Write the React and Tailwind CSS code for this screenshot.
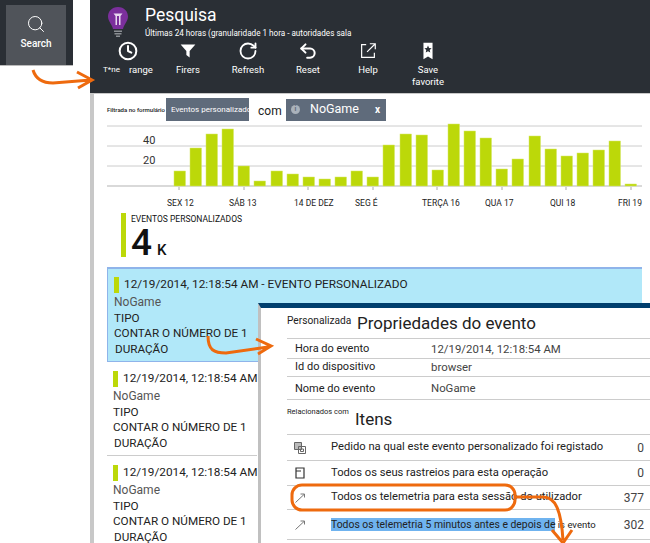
import { Clock, RotateCw, Search, Undo2 } from 'lucide-react';

const FONT = { fontFamily: 'Roboto, "Open Sans", sans-serif' };

const barData = [
  [174, 171], [190, 148], [206, 134], [222, 129], [238, 166], [254, 181], [271, 171], [287, 174],
  [303, 177], [319, 179], [335, 177], [351, 171], [367, 177], [383, 145], [400, 134], [416, 135],
  [432, 170], [448, 124], [464, 131], [480, 138], [496, 169], [512, 159], [529, 136], [545, 149],
  [561, 156], [577, 153], [593, 150], [609, 141], [625, 184],
];

const axisLabels = [
  ['SEX 12', 167, 179],
  ['SÁB 13', 229, 244],
  ['14 DE DEZ', 294, 308],
  ['SEG É', 355, 373],
  ['TERÇA 16', 422, 437],
  ['QUA 17', 485, 502],
  ['QUI 18', 550, 566],
  ['FRI 19', 618, 631],
];

const tools = [
  { label: 'range', icon: <Clock size={20} strokeWidth={2.4} /> },
  { label: 'Firers', icon: <FunnelIcon /> },
  { label: 'Refresh', icon: <RotateCw size={20} strokeWidth={2.2} /> },
  { label: 'Reset', icon: <Undo2 size={20} strokeWidth={2.4} /> },
  { label: 'Help', icon: <OpenIcon /> },
  { label: 'Save favorite', icon: <SaveIcon /> },
];

const props = [
  ['Hora do evento', '12/19/2014, 12:18:54 AM', 'h-[20px] pt-[2px]'],
  ['Id do dispositivo', 'browser', 'h-[18px]'],
  ['Nome do evento', 'NoGame', 'h-[23px] pt-[2px]'],
];

function FunnelIcon() {
  return (
    <svg width="18" height="18" viewBox="0 0 22 22">
      <path d="M2 3h18l-7 8v8l-4-3v-5z" fill="#fff" />
    </svg>
  );
}

function OpenIcon() {
  return (
    <svg width="20" height="20" viewBox="0 0 22 22" fill="none" stroke="#fff" strokeWidth="1.3">
      <path d="M9 4H4v14h14v-5M10 12l9-9M13 3h6v6" />
    </svg>
  );
}

function SaveIcon() {
  return (
    <svg width="20" height="20" viewBox="0 0 22 22">
      <path d="M6 2h10v18l-5-3-5 3z" fill="#fff" />
      <path d="M11 5l1.2 2.6 2.8.3-2.1 1.9.6 2.8-2.5-1.4-2.5 1.4.6-2.8-2.1-1.9 2.8-.3z" fill="#2a2f35" />
    </svg>
  );
}

function BulbIcon() {
  return (
    <svg width="22" height="30" viewBox="0 0 22 30">
      <path d="M11 0C4.800 0 1 4.500 1 9.500c0 5 4 7.500 5 12.500h10c1-5 5-7.500 5-12.500C21 4.500 17.200 0 11 0z" fill="#7b2f9c" />
      <path d="M6.500 6.500h9l-2 2.500v9h-1.500V9h-2v9H8.500V9z" fill="#e8d8ef" />
      <path d="M7 23.500h8v1.500H7zM7.500 26h7v1.500h-7zM9 28.500h4V30H9z" fill="#8b8f94" />
    </svg>
  );
}

function StackIcon() {
  return (
    <svg width="14" height="14" viewBox="0 0 14 14" fill="none" stroke="#666" strokeWidth="1">
      <path d="M1.500 1.500h7v7h-7z" fill="#bbb" />
      <path d="M5.500 5.500h7v7h-7z" />
      <path d="M7.500 8h3v2.500h-3z" />
    </svg>
  );
}

function PageIcon() {
  return (
    <svg width="14" height="14" viewBox="0 0 14 14" fill="none" stroke="#333" strokeWidth="1.2">
      <path d="M3 2h8v10H3zM3 5h5" />
    </svg>
  );
}

function LinkArrow() {
  return (
    <svg width="14" height="14" viewBox="0 0 14 14" fill="none" stroke="#777" strokeWidth="1">
      <path d="M2.500 11.500l8.500-8M7.500 3H11.500v3.500" />
    </svg>
  );
}

function EventItem({ selected, className = '' }) {
  return (
    <div className={`text-[11.700px] leading-[15.500px] text-[#222] ${className}`}>
      <div className="flex items-center gap-[5px] h-[16px]">
        <span className="shrink-0 w-[5px] h-[16px] bg-[#bcd809]" />
        <span className="text-[11.800px] whitespace-nowrap">
          12/19/2014, 12:18:54 AM{selected ? ' - EVENTO PERSONALIZADO' : ''}
        </span>
      </div>
      <div className="mt-[2px] text-[12px] text-[#555]">NoGame</div>
      <div>TIPO</div>
      <div className="whitespace-nowrap">CONTAR O NÚMERO DE 1</div>
      <div className="pl-[1px]">DURAÇÃO</div>
    </div>
  );
}

function RelatedRow({ icon, text, count, height, highlight }) {
  return (
    <div className={`flex items-center border-b border-[#ccc] text-[#222] ${height}`}>
      <span className="shrink-0 w-[44px] pl-[6px] flex">{icon}</span>
      {highlight ? (
        <span className="flex-1 min-w-0 whitespace-nowrap text-[9.500px]">
          <span className="bg-[#6fb3ef] text-[10.400px]">{highlight}</span>
          {text}
        </span>
      ) : (
        <span className="flex-1 min-w-0 whitespace-nowrap text-[11.200px]">{text}</span>
      )}
      <span className="pr-[6px] text-[12px] text-[#444]">{count}</span>
    </div>
  );
}

export default function App() {
  return (
    <div className="relative flex w-[650px] h-[543px] overflow-hidden bg-white" style={FONT}>
      <div className="w-[90px] shrink-0">
        <div className="w-[73px] h-[66px] pt-[5px] pl-[6px] bg-[#2a2f35] border-b border-[#bbb]">
          <div className="flex flex-col items-center w-[60px] h-[60px] pt-[9px] bg-[#50545a] text-white">
            <Search size={20} strokeWidth={1.2} />
            <span className="mt-[2px] text-[10px] font-medium">Search</span>
          </div>
        </div>
      </div>

      <div className="flex-1 min-w-0">
        <header className="h-[94px] bg-[#2a2f35] border-b border-[#c8c8c8] text-white">
          <div className="flex pl-[17px] pt-[7px] h-[40px]">
            <BulbIcon />
            <div className="ml-[16px] pt-[1px]">
              <div className="text-[17.500px] leading-[15px]">Pesquisa</div>
              <div className="mt-[5px] text-[8.150px] leading-[10px] whitespace-nowrap">
                Últimas 24 horas (granularidade 1 hora - autoridades sala
              </div>
            </div>
          </div>
          <div className="flex pl-[8px]">
            {tools.map(t => (
              <div key={t.label} className="flex flex-col items-center w-[60px]">
                <div className="h-[22px] flex items-center">{t.icon}</div>
                <div className="relative mt-[2px] w-[52px] text-center text-[9.500px] leading-[12px]">
                  {t.label === 'range' && <span className="absolute left-[1px] top-0 text-[8px]">T*ne</span>}
                  <span className={t.label === 'range' ? 'ml-[26px]' : ''}>{t.label}</span>
                </div>
              </div>
            ))}
          </div>
        </header>

        <div className="flex border-l-4 border-[#c8c8c8] h-[449px]">
          <div className="flex-1 min-w-0 pl-[13px]">
            <div className="flex items-center h-[27px] pt-[4px] text-[#222]">
              <span className="w-[59px] text-[6px] whitespace-nowrap font-medium">Filtrada no formulário</span>
              <span className="flex items-center w-[83px] h-[23px] pl-[5px] bg-[#5f6b7b] overflow-hidden text-white text-[8px] whitespace-nowrap">
                Eventos personalizados
              </span>
              <span className="ml-[9px] w-[28px] pt-[3px] text-[12px]">com</span>
              <span className="flex items-center w-[100px] h-[22px] bg-[#5f6b7b] text-white text-[12.500px]">
                <span className="ml-[5px] w-[9px] h-[9px] rounded-full bg-[#aab2bb] text-[#5f6b7b] text-[7px] leading-[9px] text-center font-bold">i</span>
                <span className="ml-[10px]">NoGame</span>
                <span className="ml-auto mr-[6px] font-bold text-[10px]">x</span>
              </span>
            </div>

            <svg width="543" height="92" viewBox="107 121 543 92" className="block">
              {[126, 146, 166].map(y => (
                <line key={y} x1="106" x2="642" y1={y} y2={y} stroke="#ccc" />
              ))}
              <line x1="106" x2="642" y1="186" y2="186" stroke="#ccc" strokeWidth="1.500" />
              {barData.map(([x, top]) => (
                <rect key={x} x={x} y={top} width="11.500" height={186 - top} fill="#bcd809" stroke="#d6e86a" strokeWidth="0.500" />
              ))}
              {axisLabels.map(([, x, tick]) => (
                <line key={tick} x1={tick} x2={tick} y1="187" y2="190" stroke="#aaa" />
              ))}
              <text x="143" y="144" fontSize="11" fill="#333">40</text>
              <text x="143" y="164" fontSize="11" fill="#333">20</text>
              {axisLabels.map(([label, x]) => (
                <text key={label} x={x} y="206" fontSize="8.500" fill="#222">{label}</text>
              ))}
            </svg>

            <div className="flex ml-[14px] h-[44px]">
              <span className="w-[5px] h-[44px] bg-[#bcd809]" />
              <div className="ml-[5px] text-[#111]">
                <div className="text-[8.500px] leading-[12px] whitespace-nowrap">EVENTOS PERSONALIZADOS</div>
                <div className="flex items-baseline mt-[3px]">
                  <span className="text-[37px] leading-[29px] font-medium">4</span>
                  <span className="ml-[5px] text-[15px] leading-[29px] font-medium">K</span>
                </div>
              </div>
            </div>

            <div className="mt-[10px] w-[535px] h-[95px] pl-[6px] pt-[8px] bg-[#b1e8f9] border-t-2 border-b border-l border-[#8fb4ea]">
              <EventItem selected />
            </div>
            <div className="w-[150px] h-[94px] pl-[6px] pt-[9px] border-b border-[#ccc]">
              <EventItem />
            </div>
            <div className="w-[150px] pl-[6px] pt-[9px]">
              <EventItem />
            </div>
          </div>
        </div>
      </div>

      <aside className="absolute left-[258px] top-[303px] right-0 bottom-0 pl-[26px] bg-white border-l-[3px] border-t-[5px] border-l-[#c0c0c0] border-t-[#003f6e] text-[#222]">
        <div className="flex items-start h-[30px] pt-[4px]">
          <span className="w-[70px] pt-[3px] text-[10.200px] leading-[12px] whitespace-nowrap">Personalizada</span>
          <span className="text-[17px] leading-[22px] whitespace-nowrap">Propriedades do evento</span>
        </div>
        <div className="border-t border-[#ccc] text-[11px]">
          {props.map(([label, value, height]) => (
            <div key={label} className={`flex items-center border-b border-[#ccc] pl-[8px] ${height}`}>
              <span className="w-[136px]">{label}</span>
              <span className="text-[11.400px] text-[#444] whitespace-nowrap">{value}</span>
            </div>
          ))}
        </div>
        <div className="flex items-start h-[34px] pt-[5px]">
          <span className="w-[68px] text-[7.500px] leading-[14px] whitespace-nowrap">Relacionados com</span>
          <span className="text-[17px] leading-[28px]">Itens</span>
        </div>
        <div className="border-t border-[#ccc]">
          <RelatedRow icon={<StackIcon />} text="Pedido na qual este evento personalizado foi registado" count="0" height="h-[26px]" />
          <RelatedRow icon={<PageIcon />} text="Todos os seus rastreios para esta operação" count="0" height="h-[25px]" />
          <RelatedRow icon={<LinkArrow />} text="Todos os telemetria para esta sessão do utilizador" count="377" height="h-[24px]" />
          <RelatedRow icon={<LinkArrow />} highlight="Todos os telemetria 5 minutos antes e depois de" text=" is evento" count="302" height="h-[30px]" />
        </div>
      </aside>

      <svg width="650" height="543" viewBox="0 0 650 543" fill="none" stroke="#ee6a0e" strokeWidth="3" className="absolute left-0 top-0 pointer-events-none">
        <path d="M33 70c3 10 10 13 20 13l38-3M77 72l15 8-14 8" />
        <path d="M208 336c0 14 6 17 18 17l42-6M256 339l15 7-13 8" />
        <rect x="292" y="485" width="223" height="25" rx="10" />
        <path d="M515 497h28c12 0 18 12 20 43M552 530l11 13 9-13" />
      </svg>
    </div>
  );
}
